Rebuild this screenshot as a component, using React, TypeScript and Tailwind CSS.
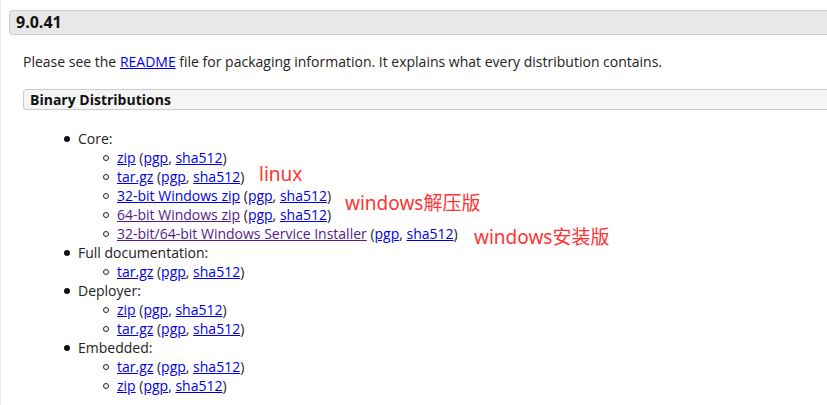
import React from 'react';

type Link = { label: string; visited?: boolean };
type Item = { main: Link };

const sections: { title: string; items: Item[] }[] = [
  {
    title: 'Core:',
    items: [
      { main: { label: 'zip' } },
      { main: { label: 'tar.gz' } },
      { main: { label: '32-bit Windows zip' } },
      { main: { label: '64-bit Windows zip', visited: true } },
      { main: { label: '32-bit/64-bit Windows Service Installer', visited: true } },
    ],
  },
  { title: 'Full documentation:', items: [{ main: { label: 'tar.gz' } }] },
  { title: 'Deployer:', items: [{ main: { label: 'zip' } }, { main: { label: 'tar.gz' } }] },
  { title: 'Embedded:', items: [{ main: { label: 'tar.gz' } }, { main: { label: 'zip' } }] },
];

function A({ label, visited }: Link) {
  return (
    <a href="#" className={visited ? 'underline text-[#551a8b]' : 'underline text-[#0000ee]'}>
      {label}
    </a>
  );
}

function Download({ item }: { item: Item }) {
  return (
    <li className="flex items-center h-[19px]">
      <span className="w-[6px] h-[6px] rounded-full border border-[#222] ml-[94px] mr-[8px]" />
      <span>
        <A {...item.main} /> (<A label="pgp" />, <A label="sha512" />)
      </span>
    </li>
  );
}

export default function App() {
  return (
    <div
      className="relative w-[827px] h-[405px] overflow-hidden bg-white text-[14px] leading-[19px] text-[#222] border-l border-[#eeeeee]"
      style={{ fontFamily: '"Open Sans", "Noto Sans", sans-serif' }}
    >
      <div className="pl-[8px] pt-[10px]">
        <h3 className="w-[900px] h-[25px] flex items-center px-[6px] bg-[#e8e8e8] border border-[#cccccc] rounded-[3px] text-[16px] font-bold text-[#111]">
          9.0.41
        </h3>
        <div className="pl-[14px]">
          <p className="mt-[17px]">
            Please see the <A label="README" /> file for packaging information. It explains what every
            distribution contains.
          </p>
          <h4 className="mt-[18px] w-[900px] h-[21px] flex items-center px-[6px] bg-[#f5f5f5] border border-[#cccccc] rounded-[3px] font-bold text-[#111]">
            Binary Distributions
          </h4>
        </div>
        <ul className="mt-[19px]">
          {sections.map((s) => (
            <li key={s.title}>
              <div className="flex items-center h-[19px]">
                <span className="w-[6px] h-[6px] rounded-full bg-[#111] ml-[55px] mr-[8px]" />
                <span>{s.title}</span>
              </div>
              <ul>
                {s.items.map((it, i) => (
                  <Download key={i} item={it} />
                ))}
              </ul>
            </li>
          ))}
        </ul>
      </div>
      <div
        className="text-[#ff3333] text-[19px] leading-[20px]"
        style={{ fontFamily: '"Noto Sans", "Noto Sans CJK SC", sans-serif' }}
      >
        <span className="absolute left-[258px] top-[164px]">linux</span>
        <span className="absolute left-[344px] top-[193px]">windows解压版</span>
        <span className="absolute left-[473px] top-[227px]">windows安装版</span>
      </div>
    </div>
  );
}
